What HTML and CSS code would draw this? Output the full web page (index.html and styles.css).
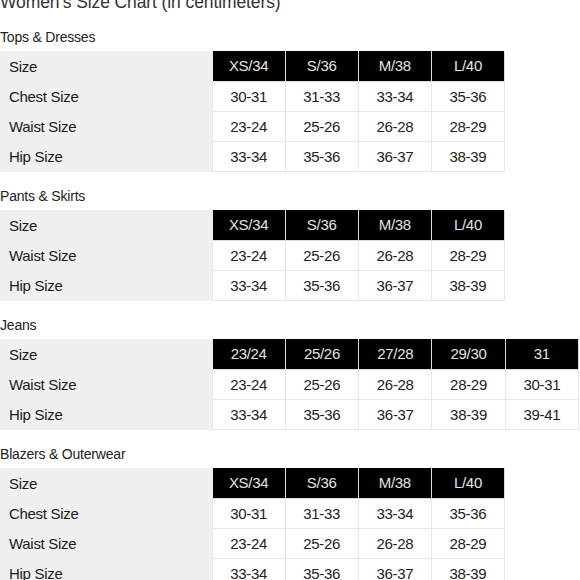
FILE: index.html
```html
<!DOCTYPE html>
<html>
<head>
<meta charset="utf-8">
<link rel="stylesheet" href="styles.css">
</head>
<body>
<h1 class="title">Women's Size Chart (in centimeters)</h1>

<section class="chart">
  <h3 class="chart-title">Tops &amp; Dresses</h3>
  <table class="sizes c4">
    <tr class="head"><td class="lab">Size</td><td class="hd">XS/34</td><td class="hd">S/36</td><td class="hd">M/38</td><td class="hd">L/40</td></tr>
    <tr><td class="lab">Chest Size</td><td>30-31</td><td>31-33</td><td>33-34</td><td>35-36</td></tr>
    <tr><td class="lab">Waist Size</td><td>23-24</td><td>25-26</td><td>26-28</td><td>28-29</td></tr>
    <tr><td class="lab">Hip Size</td><td>33-34</td><td>35-36</td><td>36-37</td><td>38-39</td></tr>
  </table>
</section>

<section class="chart">
  <h3 class="chart-title">Pants &amp; Skirts</h3>
  <table class="sizes c4">
    <tr class="head"><td class="lab">Size</td><td class="hd">XS/34</td><td class="hd">S/36</td><td class="hd">M/38</td><td class="hd">L/40</td></tr>
    <tr><td class="lab">Waist Size</td><td>23-24</td><td>25-26</td><td>26-28</td><td>28-29</td></tr>
    <tr><td class="lab">Hip Size</td><td>33-34</td><td>35-36</td><td>36-37</td><td>38-39</td></tr>
  </table>
</section>

<section class="chart">
  <h3 class="chart-title">Jeans</h3>
  <table class="sizes c5">
    <tr class="head"><td class="lab">Size</td><td class="hd">23/24</td><td class="hd">25/26</td><td class="hd">27/28</td><td class="hd">29/30</td><td class="hd">31</td></tr>
    <tr><td class="lab">Waist Size</td><td>23-24</td><td>25-26</td><td>26-28</td><td>28-29</td><td>30-31</td></tr>
    <tr><td class="lab">Hip Size</td><td>33-34</td><td>35-36</td><td>36-37</td><td>38-39</td><td>39-41</td></tr>
  </table>
</section>

<section class="chart">
  <h3 class="chart-title">Blazers &amp; Outerwear</h3>
  <table class="sizes c4">
    <tr class="head"><td class="lab">Size</td><td class="hd">XS/34</td><td class="hd">S/36</td><td class="hd">M/38</td><td class="hd">L/40</td></tr>
    <tr><td class="lab">Chest Size</td><td>30-31</td><td>31-33</td><td>33-34</td><td>35-36</td></tr>
    <tr><td class="lab">Waist Size</td><td>23-24</td><td>25-26</td><td>26-28</td><td>28-29</td></tr>
    <tr><td class="lab">Hip Size</td><td>33-34</td><td>35-36</td><td>36-37</td><td>38-39</td></tr>
  </table>
</section>
</body>
</html>
```

FILE: styles.css
```css
html, body {
  margin: 0;
  padding: 0;
  background: #fff;
}
body {
  font-family: "Liberation Sans", Arial, sans-serif;
  color: #222;
  overflow: hidden;
}
.title {
  font-size: 17.5px;
  line-height: 20px;
  font-weight: normal;
  color: #333;
  margin: -8px 0 1px 0;
  letter-spacing: -0.1px;
}
.chart-title {
  font-size: 14px;
  line-height: 16px;
  font-weight: normal;
  color: #222;
  margin: 0;
  padding: 15.5px 0 6px 0;
  letter-spacing: -0.2px;
}
.sizes {
  border-collapse: collapse;
  table-layout: fixed;
  font-size: 15px;
  letter-spacing: -0.3px;
}
.sizes.c4 { width: 505px; }
.sizes.c5 { width: 579px; }
.sizes tr { height: 30px; }
.sizes tr.head { height: 31px; }
.sizes td {
  padding: 0;
  text-align: center;
  color: #222;
  border: 1px solid #e8e8e8;
  background: #fff;
  vertical-align: middle;
}
.sizes td.lab {
  width: 212px;
  text-align: left;
  padding-left: 9px;
  box-sizing: border-box;
  background: #f0f0f0;
  color: #1a1a1a;
  border-top: none;
  border-bottom: none;
  border-left: none;
}
.sizes td.hd {
  background: #000;
  color: #e4e4e4;
  border-color: #dcdcdc;
  border-top: none;
}
```
